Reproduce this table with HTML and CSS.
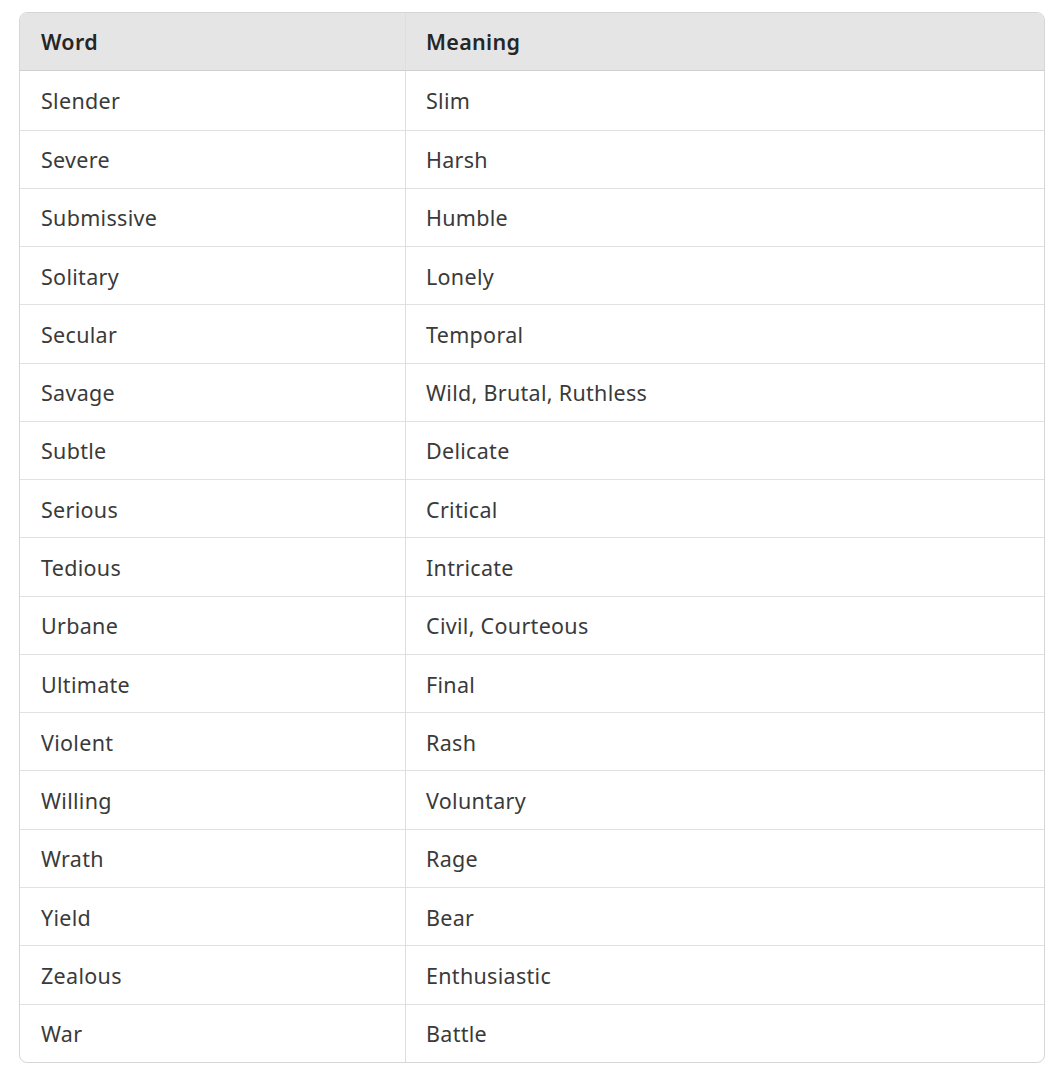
FILE: index.html
```html
<!DOCTYPE html>
<html>
<head>
<meta charset="utf-8">
<link rel="stylesheet" href="styles.css">
</head>
<body>
<div class="wrap">
<table class="vocab">
<thead>
<tr><th class="c1">Word</th><th>Meaning</th></tr>
</thead>
<tbody>
<tr><td class="c1">Slender</td><td>Slim</td></tr>
<tr><td class="c1">Severe</td><td>Harsh</td></tr>
<tr><td class="c1">Submissive</td><td>Humble</td></tr>
<tr><td class="c1">Solitary</td><td>Lonely</td></tr>
<tr><td class="c1">Secular</td><td>Temporal</td></tr>
<tr><td class="c1">Savage</td><td>Wild, Brutal, Ruthless</td></tr>
<tr><td class="c1">Subtle</td><td>Delicate</td></tr>
<tr><td class="c1">Serious</td><td>Critical</td></tr>
<tr><td class="c1">Tedious</td><td>Intricate</td></tr>
<tr><td class="c1">Urbane</td><td>Civil, Courteous</td></tr>
<tr><td class="c1">Ultimate</td><td>Final</td></tr>
<tr><td class="c1">Violent</td><td>Rash</td></tr>
<tr><td class="c1">Willing</td><td>Voluntary</td></tr>
<tr><td class="c1">Wrath</td><td>Rage</td></tr>
<tr><td class="c1">Yield</td><td>Bear</td></tr>
<tr><td class="c1">Zealous</td><td>Enthusiastic</td></tr>
<tr><td class="c1">War</td><td>Battle</td></tr>
</tbody>
</table>
</div>
</body>
</html>
```
FILE: styles.css
```css
html, body {
  margin: 0;
  padding: 0;
  background: #ffffff;
}
.wrap {
  padding: 12px 13px 0 19px;
}
.vocab {
  width: 100%;
  table-layout: fixed;
  border-collapse: separate;
  border-spacing: 0;
  border: 1px solid #d6d6d6;
  border-radius: 8px;
  overflow: hidden;
  font-family: "Noto Sans", "Open Sans", sans-serif;
  font-size: 21.5px;
  letter-spacing: 0.3px;
  color: #3a3a3a;
}
.vocab th, .vocab td {
  text-align: left;
  padding: 0 20px;
  height: 58.28px;
  box-sizing: border-box;
  white-space: nowrap;
}
.vocab th {
  background: #e5e5e5;
  font-weight: 600;
  color: #262626;
  border-bottom: 1px solid #cfcfcf;
}
.vocab td {
  border-top: 1px solid #e1e1e1;
  padding-top: 1px;
}
.vocab tbody tr:first-child td {
  border-top: none;
}
.vocab .c1 {
  width: 386px;
  border-right: 1px solid #dedede;
  padding-left: 21px;
}
```
